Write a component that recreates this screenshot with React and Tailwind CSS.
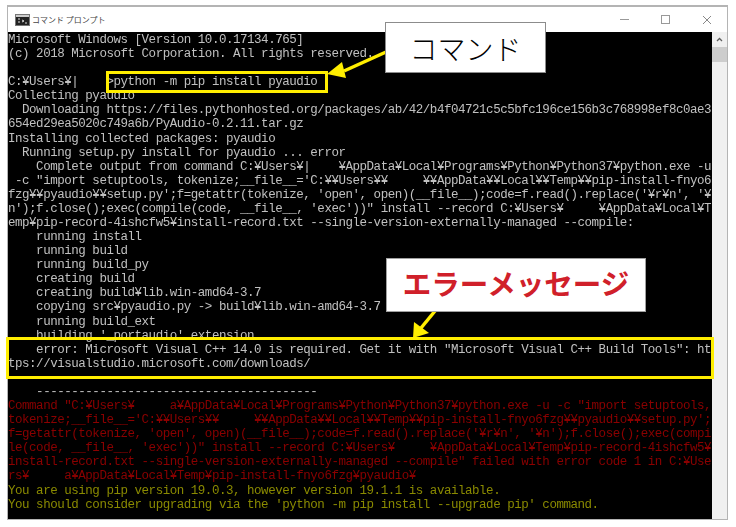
import React from "react";

const grayLines = [
  "Microsoft Windows [Version 10.0.17134.765]",
  "(c) 2018 Microsoft Corporation. All rights reserved.",
  "",
  "C:¥Users¥|    >python -m pip install pyaudio",
  "Collecting pyaudio",
  "  Downloading https://files.pythonhosted.org/packages/ab/42/b4f04721c5c5bfc196ce156b3c768998ef8c0ae3",
  "654ed29ea5020c749a6b/PyAudio-0.2.11.tar.gz",
  "Installing collected packages: pyaudio",
  "  Running setup.py install for pyaudio ... error",
  "    Complete output from command C:¥Users¥|    ¥AppData¥Local¥Programs¥Python¥Python37¥python.exe -u",
  ' -c "import setuptools, tokenize;__file__=\'C:¥¥Users¥¥     ¥¥AppData¥¥Local¥¥Temp¥¥pip-install-fnyo6',
  "fzg¥¥pyaudio¥¥setup.py';f=getattr(tokenize, 'open', open)(__file__);code=f.read().replace('¥r¥n', '¥",
  "n');f.close();exec(compile(code, __file__, 'exec'))\" install --record C:¥Users¥     ¥AppData¥Local¥T",
  "emp¥pip-record-4ishcfw5¥install-record.txt --single-version-externally-managed --compile:",
  "    running install",
  "    running build",
  "    running build_py",
  "    creating build",
  "    creating build¥lib.win-amd64-3.7",
  "    copying src¥pyaudio.py -> build¥lib.win-amd64-3.7",
  "    running build_ext",
  "    building '_portaudio' extension",
  '    error: Microsoft Visual C++ 14.0 is required. Get it with "Microsoft Visual C++ Build Tools": ht',
  "tps://visualstudio.microsoft.com/downloads/",
  "",
  "    ----------------------------------------",
];

const redLines = [
  'Command "C:¥Users¥     a¥AppData¥Local¥Programs¥Python¥Python37¥python.exe -u -c "import setuptools,',
  "tokenize;__file__='C:¥¥Users¥¥     ¥¥AppData¥¥Local¥¥Temp¥¥pip-install-fnyo6fzg¥¥pyaudio¥¥setup.py';",
  "f=getattr(tokenize, 'open', open)(__file__);code=f.read().replace('¥r¥n', '¥n');f.close();exec(compi",
  "le(code, __file__, 'exec'))\" install --record C:¥Users¥     ¥AppData¥Local¥Temp¥pip-record-4ishcfw5¥",
  'install-record.txt --single-version-externally-managed --compile" failed with error code 1 in C:¥Use',
  "rs¥     a¥AppData¥Local¥Temp¥pip-install-fnyo6fzg¥pyaudio¥",
];

const yellowLines = [
  "You are using pip version 19.0.3, however version 19.1.1 is available.",
  "You should consider upgrading via the 'python -m pip install --upgrade pip' command.",
];

const Lines = ({ lines, className }) =>
  lines.map((line, i) => (
    <div key={i} className={`h-[14.09px] ${className}`}>
      {line}
    </div>
  ));

const CmdIcon = () => (
  <svg width="15" height="12" viewBox="0 0 15 12" className="shrink-0">
    <rect x="0.5" y="0.5" width="14" height="11" fill="#222" stroke="#777" />
    <rect x="1" y="1" width="13" height="2" fill="#ccc" />
    <path d="M3 5h2M3 8h2M7 6l2 1-2 1M10 9h2" stroke="#ddd" fill="none" />
  </svg>
);

const App = () => {
  return (
    <div className="relative w-[736px] h-[527px] bg-white overflow-hidden">
      <div className="pt-[5px] pl-[7px] w-[728px]">
        <div className="flex flex-col h-[515px] border-t-2 border-l border-r border-b border-[#b4b4b4]">
          {/* title bar */}
          <div className="flex items-center h-[25px] shrink-0 bg-white">
            <div className="flex items-center gap-[2px] pl-[7px] pt-[1px]">
              <CmdIcon />
              <span className="text-[8px] text-[#444] font-['Noto_Sans_CJK_JP',sans-serif]">コマンド プロンプト</span>
            </div>
            <div className="flex items-center ml-auto">
              <div className="w-[41px] flex justify-center">
                <div className="w-[9px] h-[1px] bg-[#999]" />
              </div>
              <div className="w-[41px] flex justify-center">
                <div className="w-[9px] h-[9px] border border-[#999]" />
              </div>
              <div className="w-[41px] flex justify-center">
                <svg width="10" height="10" viewBox="0 0 10 10">
                  <path d="M1 1l8 8M9 1l-8 8" stroke="#888" fill="none" />
                </svg>
              </div>
            </div>
          </div>
          {/* console */}
          <div className="flex flex-1 min-h-0">
            <div className="w-[704px] shrink-0 bg-black overflow-hidden whitespace-pre pt-[1px] font-['Liberation_Mono',monospace] text-[12.5px] leading-[14.09px] tracking-[-0.47px] blur-[0.4px]">
              <Lines lines={grayLines} className="text-[#c0c0c0]" />
              <Lines lines={redLines} className="text-[#8b0000]" />
              <Lines lines={yellowLines} className="text-[#8a8a00]" />
            </div>
            {/* scrollbar */}
            <div className="flex-1 flex flex-col bg-[#f0f0f0]">
              <div className="h-[15px] flex items-center justify-center">
                <svg width="7" height="5" viewBox="0 0 7 5">
                  <path d="M1 4l2.5-2.5L6 4" stroke="#606060" strokeWidth="1.3" fill="none" />
                </svg>
              </div>
              <div className="h-[15px] bg-[#cdcdcd]" />
            </div>
          </div>
        </div>
      </div>

      {/* annotations over the screenshot */}
      <div className="absolute left-[106px] top-[71px] w-[222px] h-[22px] border-[3px] border-[#ffee00]" />
      <div className="absolute left-[6px] top-[337px] w-[708px] h-[42px] border-[3px] border-[#ffee00]" />

      <svg className="absolute left-[320px] top-[45px]" width="70" height="40" viewBox="0 0 70 40">
        <path d="M66 7L24 26" stroke="#ffee00" strokeWidth="3.5" fill="none" />
        <path d="M7 29L22 17L26 33Z" fill="#ffee00" />
      </svg>
      <svg className="absolute left-[405px] top-[308px]" width="40" height="32" viewBox="0 0 40 32">
        <path d="M30 3L16 20" stroke="#ffee00" strokeWidth="3.5" fill="none" />
        <path d="M8 30L9 14L24 25Z" fill="#ffee00" />
      </svg>

      <div className="absolute left-[385px] top-[22px] w-[161px] h-[51px] bg-white border border-[#8c8c8c] flex items-center justify-center text-[28px] leading-none text-black font-['Noto_Sans_CJK_JP',sans-serif] font-light">
        コマンド
      </div>
      <div className="absolute left-[386px] top-[258px] w-[260px] h-[54px] bg-white border border-[#a0a0a0] flex items-center justify-center pb-[3px] text-[28.5px] leading-none text-[#d0202a] font-['Noto_Sans_CJK_JP',sans-serif] font-bold">
        エラーメッセージ
      </div>
    </div>
  );
};

export default App;
